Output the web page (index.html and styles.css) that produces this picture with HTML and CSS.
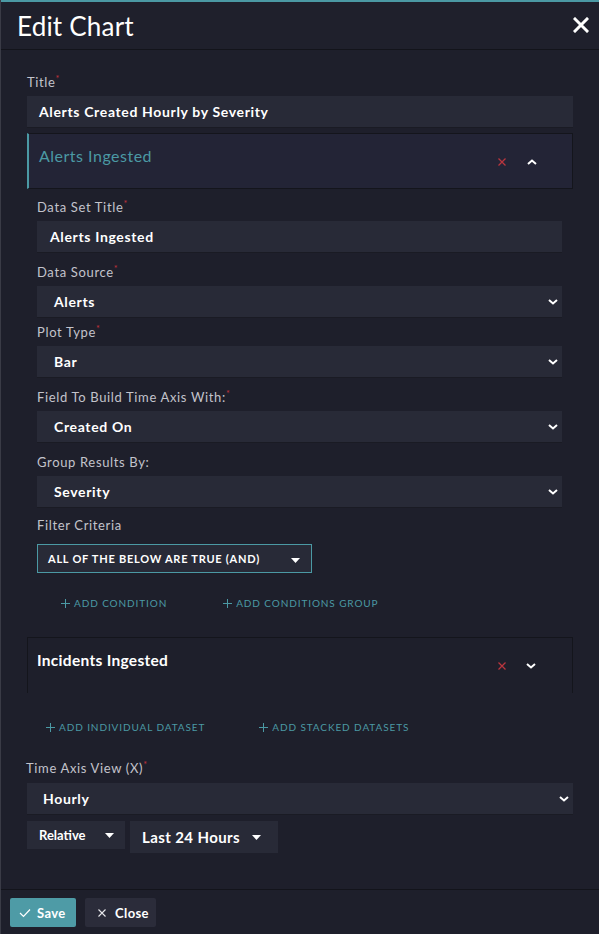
FILE: index.html
```html
<!DOCTYPE html>
<html lang="en">
<head>
<meta charset="utf-8">
<title>Edit Chart</title>
<link rel="stylesheet" href="styles.css">
</head>
<body>
<div class="modal">
  <header class="modal-head">
    <h1 class="modal-title">Edit Chart</h1>
    <button class="icon-btn close-btn" aria-label="Close">
      <svg width="16" height="16" viewBox="0 0 16 16"><path d="M2 2 L14 14 M14 2 L2 14" stroke="#fff" stroke-width="3" stroke-linecap="square" fill="none"/></svg>
    </button>
  </header>

  <main class="modal-body">
    <div class="field">
      <div class="label">Title<span class="req">*</span></div>
      <div class="input input-title">Alerts Created Hourly by Severity</div>
    </div>

    <section class="dataset dataset-open">
      <div class="ds-head">
        <span class="ds-name">Alerts Ingested</span>
        <span class="ds-actions">
          <svg class="ic-del" width="8" height="8" viewBox="0 0 8 8"><path d="M0.5 0.5 L7.5 7.5 M7.5 0.5 L0.5 7.5" stroke="#b9363e" stroke-width="1.3" fill="none"/></svg>
          <svg class="ic-chev" width="10" height="6" viewBox="0 0 10 6"><path d="M1 5 L5 1.5 L9 5" stroke="#fff" stroke-width="2" fill="none"/></svg>
        </span>
      </div>
      <div class="ds-body">
        <div class="field">
          <div class="label">Data Set Title<span class="req">*</span></div>
          <div class="input">Alerts Ingested</div>
        </div>
        <div class="field">
          <div class="label">Data Source<span class="req">*</span></div>
          <div class="input select">Alerts<svg class="sel-chev" width="10" height="6" viewBox="0 0 10 6"><path d="M1 1 L5 4.5 L9 1" stroke="#fff" stroke-width="2" fill="none"/></svg></div>
        </div>
        <div class="field field-tight">
          <div class="label">Plot Type<span class="req">*</span></div>
          <div class="input select">Bar<svg class="sel-chev" width="10" height="6" viewBox="0 0 10 6"><path d="M1 1 L5 4.5 L9 1" stroke="#fff" stroke-width="2" fill="none"/></svg></div>
        </div>
        <div class="field">
          <div class="label">Field To Build Time Axis With:<span class="req">*</span></div>
          <div class="input select">Created On<svg class="sel-chev" width="10" height="6" viewBox="0 0 10 6"><path d="M1 1 L5 4.5 L9 1" stroke="#fff" stroke-width="2" fill="none"/></svg></div>
        </div>
        <div class="field">
          <div class="label">Group Results By:</div>
          <div class="input select">Severity<svg class="sel-chev" width="10" height="6" viewBox="0 0 10 6"><path d="M1 1 L5 4.5 L9 1" stroke="#fff" stroke-width="2" fill="none"/></svg></div>
        </div>
        <div class="field field-filter">
          <div class="label">Filter Criteria</div>
          <div class="filter-box">
            <span>ALL OF THE BELOW ARE TRUE (AND)</span>
            <svg class="caret" width="9" height="5" viewBox="0 0 9 5"><path d="M0 0 H9 L4.5 5 Z" fill="#fff"/></svg>
          </div>
        </div>
        <div class="add-row add-row-cond">
          <span class="add-link"><svg width="9" height="9" viewBox="0 0 9 9"><path d="M4.5 0 V9 M0 4.5 H9" stroke="#4b99a4" stroke-width="1"/></svg>ADD CONDITION</span>
          <span class="add-link"><svg width="9" height="9" viewBox="0 0 9 9"><path d="M4.5 0 V9 M0 4.5 H9" stroke="#4b99a4" stroke-width="1"/></svg>ADD CONDITIONS GROUP</span>
        </div>
      </div>
    </section>

    <section class="dataset dataset-closed">
      <div class="ds-head">
        <span class="ds-name">Incidents Ingested</span>
        <span class="ds-actions">
          <svg class="ic-del" width="8" height="8" viewBox="0 0 8 8"><path d="M0.5 0.5 L7.5 7.5 M7.5 0.5 L0.5 7.5" stroke="#b9363e" stroke-width="1.3" fill="none"/></svg>
          <svg class="ic-chev" width="10" height="6" viewBox="0 0 10 6"><path d="M1 1 L5 4.5 L9 1" stroke="#fff" stroke-width="2" fill="none"/></svg>
        </span>
      </div>
    </section>

    <div class="add-row add-row-ds">
      <span class="add-link"><svg width="9" height="9" viewBox="0 0 9 9"><path d="M4.5 0 V9 M0 4.5 H9" stroke="#4b99a4" stroke-width="1"/></svg>ADD INDIVIDUAL DATASET</span>
      <span class="add-link"><svg width="9" height="9" viewBox="0 0 9 9"><path d="M4.5 0 V9 M0 4.5 H9" stroke="#4b99a4" stroke-width="1"/></svg>ADD STACKED DATASETS</span>
    </div>

    <div class="field field-axis">
      <div class="label">Time Axis View (X)<span class="req">*</span></div>
      <div class="input select select-hourly">Hourly<svg class="sel-chev" width="10" height="6" viewBox="0 0 10 6"><path d="M1 1 L5 4.5 L9 1" stroke="#fff" stroke-width="2" fill="none"/></svg></div>
    </div>

    <div class="range-row">
      <div class="mini-select mini-relative">Relative<svg class="caret" width="9" height="5" viewBox="0 0 9 5"><path d="M0 0 H9 L4.5 5 Z" fill="#fff"/></svg></div>
      <div class="mini-select mini-range">Last 24 Hours<svg class="caret" width="9" height="5" viewBox="0 0 9 5"><path d="M0 0 H9 L4.5 5 Z" fill="#fff"/></svg></div>
    </div>
  </main>

  <footer class="modal-foot">
    <button class="btn btn-save"><svg width="12" height="10" viewBox="0 0 12 10"><path d="M1 5 L4.5 8.5 L11 1.5" stroke="#fff" stroke-width="1.2" fill="none"/></svg>Save</button>
    <button class="btn btn-close"><svg width="8" height="8" viewBox="0 0 8 8"><path d="M0.5 0.5 L7.5 7.5 M7.5 0.5 L0.5 7.5" stroke="#e8e8ec" stroke-width="1.1" fill="none"/></svg>Close</button>
  </footer>
</div>
</body>
</html>
```

FILE: styles.css
```css
* { box-sizing: border-box; }
html, body { margin: 0; padding: 0; }
body {
  background: #1e1f2b;
  font-family: Lato, "Open Sans", "Liberation Sans", sans-serif;
  color: #fff;
}
.modal {
  width: 599px;
  height: 934px;
  display: flex;
  flex-direction: column;
  background: #1e1f2b;
  border-left: 1px solid #3a3b46;
}
.modal-head {
  height: 50px;
  border-top: 2px solid #4b99a4;
  border-bottom: 1px solid #13141b;
  display: flex;
  align-items: center;
  justify-content: space-between;
  padding: 0 10px 0 16px;
  background: #1f202c;
}
.modal-title {
  margin: 0;
  font-size: 26px;
  font-weight: 400;
  line-height: 30px;
  color: #fff;
  letter-spacing: 0.2px;
}
.icon-btn {
  background: none;
  border: 0;
  padding: 0;
  display: flex;
  cursor: pointer;
}
.close-btn { margin-top: -2px; }

.modal-body {
  flex: 1;
  padding: 22px 26px 0 26px;
}
.field { display: flex; flex-direction: column; }
.label {
  font-size: 13px;
  line-height: 20px;
  color: #c3c3cb;
  margin-bottom: 4px;
  letter-spacing: 0.65px;
}
.req {
  color: #c5323c;
  font-size: 9px;
  vertical-align: top;
  line-height: 14px;
  margin-left: 0;
  letter-spacing: 0;
}
.input {
  height: 32px;
  background: #282a37;
  border-bottom: 1px solid #1a1b24;
  display: flex;
  align-items: center;
  padding: 0 13px;
  font-size: 14px;
  font-weight: 700;
  color: #fff;
  letter-spacing: 0.65px;
}
.input-title { padding-left: 12px; }
.select { padding-left: 17px; justify-content: space-between; padding-right: 4px; }
.sel-chev { flex: none; }

.dataset { margin-top: 5px; }
.ds-head {
  height: 56px;
  display: flex;
  justify-content: space-between;
  align-items: flex-start;
  padding: 12px 0 0 10px;
}
.dataset-open .ds-head {
  background: #232436;
  border: 1px solid #14151c;
  border-left: 2px solid #4b99a4;
}
.ds-name {
  font-size: 16px;
  line-height: 20px;
  letter-spacing: 0.5px;
}
.dataset-open .ds-name { color: #4b99a4; }
.dataset-closed .ds-name { color: #fff; font-weight: 700; font-size: 15.5px; letter-spacing: 0.3px; }
.ds-actions {
  display: flex;
  align-items: center;
  gap: 21px;
  margin-top: 12px;
  margin-right: 35px;
}
.dataset-closed { margin-top: 26px; }
.dataset-closed .ds-head {
  border: 1px solid #14151c;
  border-bottom: 0;
  padding-left: 9px;
}
.dataset-closed .ds-actions { margin-right: 36px; gap: 20px; }

.ds-body {
  padding: 8px 11px 0 10px;
  display: flex;
  flex-direction: column;
  gap: 9px;
}
.field-tight { margin-top: -5px; }
.field-filter { margin-top: -2px; }
.field-filter .label { margin-bottom: 9px; }
.filter-box {
  width: 275px;
  height: 29px;
  border: 1px solid #4b99a4;
  background: #282a37;
  display: flex;
  align-items: center;
  justify-content: space-between;
  padding: 0 11px 0 10px;
  font-size: 11px;
  font-weight: 700;
  letter-spacing: 0.75px;
}
.filter-box .caret { margin-top: 4px; }

.add-row {
  display: flex;
  font-size: 10px;
  line-height: 16px;
  color: #4b99a4;
  letter-spacing: 0.9px;
}
.add-link { display: flex; align-items: center; gap: 4px; }
.add-row-cond { margin-top: 13px; padding-left: 24px; gap: 56px; }
.add-row-ds { margin-top: 26px; padding-left: 19px; gap: 54px; }

.field-axis { margin-top: 23px; }
.field-axis .label { margin-left: -1px; margin-bottom: 5px; }
.select-hourly { padding-left: 16px; }

.range-row {
  display: flex;
  align-items: flex-start;
  gap: 5px;
  margin-top: 6px;
}
.mini-select {
  background: #282a37;
  display: flex;
  align-items: center;
  justify-content: space-between;
  color: #fff;
  font-weight: 700;
}
.mini-relative {
  width: 98px;
  height: 28px;
  padding: 0 11px 0 12px;
  font-size: 13px;
}
.mini-range {
  width: 148px;
  height: 32px;
  padding: 0 17px 0 12px;
  font-size: 15px;
  letter-spacing: 0.4px;
}

.modal-foot {
  height: 45px;
  border-top: 1px solid #13141b;
  display: flex;
  align-items: flex-start;
  gap: 9px;
  padding: 8px 9px 0 9px;
}
.btn {
  height: 29px;
  border: 0;
  border-radius: 2px;
  display: flex;
  align-items: center;
  gap: 6px;
  font-family: Lato, "Open Sans", "Liberation Sans", sans-serif;
  font-size: 13px;
  font-weight: 700;
  color: #fff;
  letter-spacing: 0.4px;
  cursor: pointer;
}
.btn-save { width: 66px; background: #4e9ba6; padding: 0 0 0 9px; }
.btn-close { width: 71px; background: #2b2c3a; padding: 0 0 0 13px; gap: 9px; }
```
